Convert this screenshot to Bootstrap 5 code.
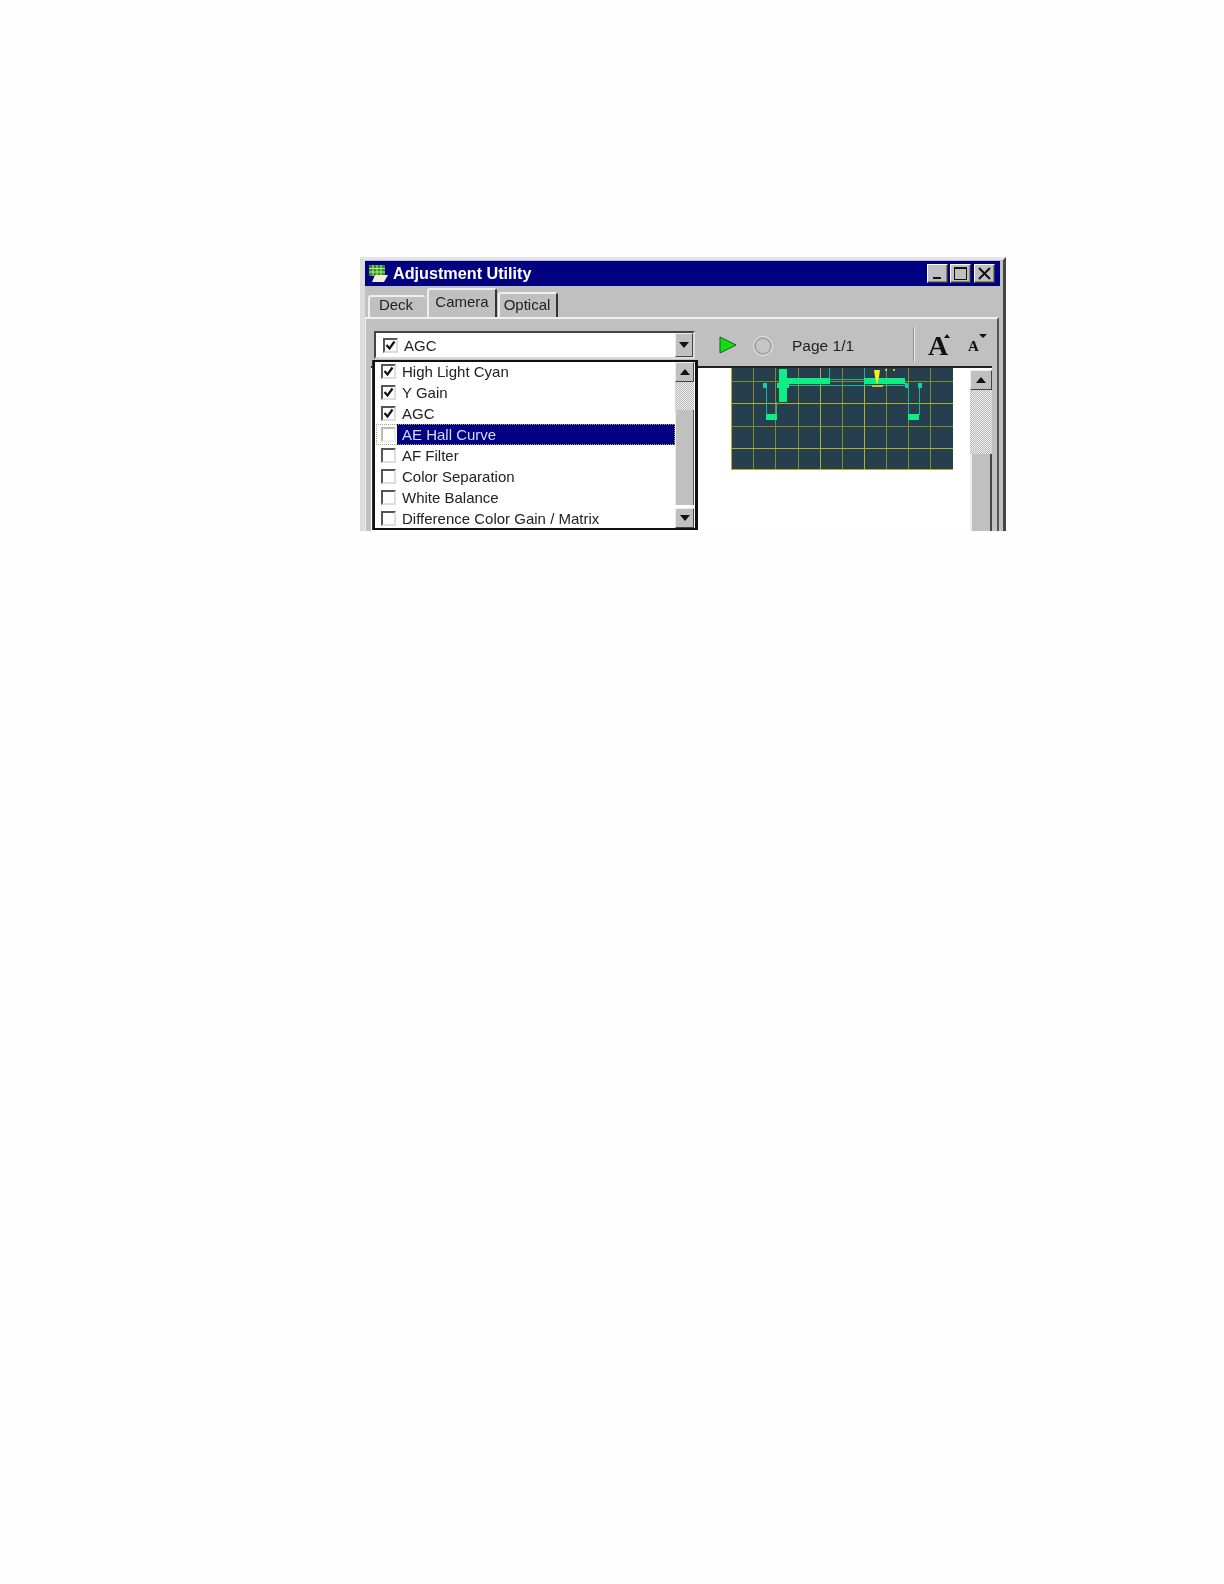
<!DOCTYPE html>
<html lang="en">
<head>
<meta charset="utf-8">
<title>Adjustment Utility</title>
<link rel="stylesheet" href="https://cdn.jsdelivr.net/npm/bootstrap@5.3.0/dist/css/bootstrap.min.css">
<style>
html,body{background:#fefefe;height:1584px;overflow:hidden}
body{font-family:"Liberation Sans",Arial,sans-serif;color:#222}
.au-win{margin:257px 0 0 360px;width:646px;height:274px;background:#c0c0c0;border-top:3px solid #e6e6e6;border-left:5px solid #dcdcdc;border-right:3px solid #444;position:relative;overflow:hidden;filter:blur(.45px)}
.au-title{height:25px;margin:1px 3px 0 0;background:#000080;color:#fff;font-weight:700;font-size:16.2px;line-height:25px;padding:0 5px 0 4px}
.au-title>svg{margin-right:5px;flex:none}
.au-wb{width:21px;height:19px;background:#c0c0c0;border:1px solid;border-color:#fff #333 #333 #fff;box-shadow:inset -1px -1px 0 #808080}
.au-wb svg{margin:0;display:block}
.au-wbgap{margin-left:2px}
.au-wbgap2{margin-left:3px}
.au-tabs{height:31px;align-items:flex-end;padding-left:3px;font-size:15px}
.au-tab{border-top:2px solid #efefef;border-left:2px solid #efefef;border-right:2px solid #333;border-radius:3px 3px 0 0;color:#222;text-align:center}
.au-t1{width:57px;height:22px;line-height:16px;border-right:0;margin-right:2px;padding-right:3px}
.au-t2{width:70px;height:29px;line-height:24px;margin-right:1px}
.au-t3{width:60px;height:25px;line-height:22px;padding-right:2px}
.au-panel{border-top:2px solid #f0f0f0;border-right:2px solid #555;margin-right:4px;height:222px;box-shadow:inset 1px 0 0 #eee}
.au-bar{height:47px;padding-top:12px;position:relative}
.au-combo{margin-left:9px;width:321px;height:28px;background:#fff;border:2px solid;border-color:#444 #ddd #ddd #444;padding-left:7px;font-size:15px;line-height:23px}
.au-chk{width:15px;height:15px;border:2px solid;border-color:#555 #ddd #ddd #555;background:#fff;flex:none;display:block}
.au-chk svg{display:block}
.au-combo .au-chk{margin-right:6px}
.au-cbtn{width:18px;height:24px;background:#c0c0c0;border:1px solid;border-color:#eee #444 #444 #eee;margin-left:auto}
.au-tri-d{width:0;height:0;border-left:5px solid transparent;border-right:5px solid transparent;border-top:6px solid #111}
.au-tri-u{width:0;height:0;border-left:5px solid transparent;border-right:5px solid transparent;border-bottom:6px solid #111}
.au-play{margin-left:24px;margin-top:5px;flex:none}
.au-round{margin-left:17px;margin-top:6px;width:18px;height:18px;border-radius:50%;border:2px solid #a4a4a4;background:#c6c6c6;box-shadow:0 0 0 1px #e4e4e4;flex:none}
.au-page{margin-left:20px;margin-top:6px;font-size:15.5px;width:123px;line-height:18px;white-space:nowrap}
.au-sep{width:2px;height:35px;margin-top:-4px;background:#909090;border-right:1px solid #eee;margin-left:-2px;margin-right:2px}
.au-big{margin-left:11px;margin-top:5px;font-family:"Liberation Serif",serif;font-weight:700;font-size:28px;line-height:20px;color:#111;width:20px}
.au-mini{font-family:"Liberation Serif",serif;font-weight:700;font-size:15px;line-height:14px;color:#111;margin-left:18px;margin-top:8px;width:11px}
.au-cup{width:0;height:0;border-left:3px solid transparent;border-right:3px solid transparent;border-bottom:4px solid #111;margin-top:3px;margin-left:-4px}
.au-cdn{width:0;height:0;border-left:4px solid transparent;border-right:4px solid transparent;border-top:4px solid #111;margin-top:3px}
.au-view{margin-left:6px;margin-right:5px;height:172px;background:#fff;border-top:2px solid #222;position:relative}
.au-graph{margin:0 0 0 360px;width:222px;height:102px;display:block;flex:none}
.au-vsb{margin-left:17px;width:22px;flex:none;margin-top:2px}
.au-sbtn{height:20px;background:#c0c0c0;border:1px solid;border-color:#eee #444 #444 #eee;flex:none}
.au-hatch{background-color:#e8e8e8;background-image:repeating-conic-gradient(#b8b8b8 0 25%,#eee 0 50%);background-size:2px 2px}
.au-thumb{background:#c0c0c0;border-left:2px solid #eee;border-right:2px solid #444}
.au-drop{position:absolute;left:8px;top:41px;width:325px;height:170px;background:#fff;border:2px solid #111;border-right-width:3px;z-index:5;box-shadow:-1px 0 0 #333}
.au-rows{width:300px;flex:none;margin-top:-1px}
.au-row{height:21px;padding-left:6px;font-size:15px;line-height:20px;white-space:nowrap;color:#222}
.au-row .au-chk{margin-right:6px}
.au-row.au-sel{outline:1px dotted #b0a860;outline-offset:-1px;color:#d8d8ff;margin-left:1px;padding-left:5px;background:linear-gradient(90deg,#fff 0 21px,#000080 21px)}
.au-row.au-sel .au-chk{border-color:#bbb #eee #eee #bbb}
.au-dsb{width:19px;flex:none}
.au-dsb .au-sbtn{height:20px}
.au-dsb .au-hatch{height:28px}
.au-dsb .au-thumb{height:95px;border-left:1px solid #eee;border-right:1px solid #555}
</style>
</head>
<body>
<div class="au-win">
  <div class="au-title d-flex align-items-center">
    <svg width="19" height="17" viewBox="0 0 19 17"><rect x="0" y="0" width="16" height="11" fill="#2e8b3c"/><path d="M0 3.5h16M0 7h16M4 0v11M8 0v11M12 0v11" stroke="#b8f06a" stroke-width="1"/><path d="M6 10h13l-4 7H3z" fill="#f4f0d8"/></svg>
    <span>Adjustment Utility</span>
    <div class="au-wb ms-auto"><svg width="19" height="17"><rect x="5" y="12" width="8" height="2" fill="#111"/></svg></div>
    <div class="au-wb au-wbgap"><svg width="19" height="17"><rect x="3.5" y="2.5" width="12" height="12" fill="none" stroke="#111"/><rect x="3" y="2" width="13" height="2" fill="#111"/></svg></div>
    <div class="au-wb au-wbgap2"><svg width="19" height="17"><path d="M4 3l11 11M15 3L4 14" stroke="#111" stroke-width="2"/></svg></div>
  </div>
  <div class="au-tabs d-flex">
    <div class="au-tab au-t1">Deck</div>
    <div class="au-tab au-t2">Camera</div>
    <div class="au-tab au-t3">Optical</div>
  </div>
  <div class="au-panel position-relative">
    <div class="au-bar d-flex align-items-start">
      <div class="au-combo d-flex align-items-center">
        <span class="au-chk"><svg width="11" height="11" viewBox="0 0 11 11"><path d="M1.5 5l3 3.5 5-7" fill="none" stroke="#111" stroke-width="2.2"/></svg></span>
        <span>AGC</span>
        <div class="au-cbtn d-flex align-items-center justify-content-center"><div class="au-tri-d"></div></div>
      </div>
      <svg class="au-play" width="18" height="18" viewBox="0 0 18 18"><path d="M1 1l16 8-16 8z" fill="#10e010" stroke="#1a5a1a" stroke-width="1"/></svg>
      <div class="au-round"></div>
      <div class="au-page">Page 1/1</div>
      <div class="au-sep"></div>
      <div class="au-big">A</div><div class="au-cup"></div>
      <div class="au-mini">A</div><div class="au-cdn"></div>
    </div>
    <div class="au-view d-flex align-items-start">
      <svg class="au-graph" viewBox="0 0 222 102">
        <rect width="222" height="102" fill="#263f4e"/>
        <g stroke="#7f8a2c" stroke-width="1">
          <path d="M22.5 0v102M44.5 0v102M67.5 0v102M111.5 0v102M155.5 0v102M177.5 0v102M199.5 0v102M0 13.5h222M0 58.5h222"/>
        </g>
        <g stroke="#b0b028" stroke-width="1">
          <path d="M.5 0v102M89.5 0v102M133.5 0v102M0 35.5h222M0 80.5h222M0 101.5h222"/>
        </g>
        <g stroke="#1fb593" stroke-width="1" fill="none">
          <path d="M35.5 19v28M45.5 34v13M177.5 16v31M188.5 20v27M98.5 0v10M133.5 0v10M47 17.5h128M98 11.5h36"/>
        </g>
        <g fill="#0fee84">
          <rect x="48" y="1" width="8" height="33"/><rect x="46" y="15" width="12" height="5"/>
          <rect x="56" y="10" width="43" height="6"/><rect x="133" y="10" width="41" height="6"/>
          <rect x="35" y="46" width="11" height="6"/><rect x="177" y="46" width="11" height="6"/>
        </g>
        <g fill="#14d0a8"><rect x="32" y="15" width="4" height="5"/><rect x="187" y="15" width="4" height="5"/><rect x="174" y="15" width="3" height="5"/></g>
        <g fill="#f4ee20"><path d="M143 2h6l-1 7-2 8-2-8z"/><rect x="141" y="17" width="11" height="2" fill="#c8c030"/><circle cx="155" cy="2" r="1"/><circle cx="163" cy="2" r="1"/></g>
      </svg>
      <div class="au-vsb d-flex flex-column">
        <div class="au-sbtn d-flex align-items-center justify-content-center"><div class="au-tri-u"></div></div>
        <div class="au-hatch" style="height:64px"></div>
        <div class="au-thumb" style="height:90px"></div>
      </div>
    </div>
    <div class="au-drop d-flex">
      <div class="au-rows">
        <div class="au-row d-flex align-items-center"><span class="au-chk"><svg width="11" height="11" viewBox="0 0 11 11"><path d="M1.5 5l3 3.5 5-7" fill="none" stroke="#111" stroke-width="2.2"/></svg></span><span>High Light Cyan</span></div>
        <div class="au-row d-flex align-items-center"><span class="au-chk"><svg width="11" height="11" viewBox="0 0 11 11"><path d="M1.5 5l3 3.5 5-7" fill="none" stroke="#111" stroke-width="2.2"/></svg></span><span>Y Gain</span></div>
        <div class="au-row d-flex align-items-center"><span class="au-chk"><svg width="11" height="11" viewBox="0 0 11 11"><path d="M1.5 5l3 3.5 5-7" fill="none" stroke="#111" stroke-width="2.2"/></svg></span><span>AGC</span></div>
        <div class="au-row au-sel d-flex align-items-center"><span class="au-chk"></span><span>AE Hall Curve</span></div>
        <div class="au-row d-flex align-items-center"><span class="au-chk"></span><span>AF Filter</span></div>
        <div class="au-row d-flex align-items-center"><span class="au-chk"></span><span>Color Separation</span></div>
        <div class="au-row d-flex align-items-center"><span class="au-chk"></span><span>White Balance</span></div>
        <div class="au-row d-flex align-items-center"><span class="au-chk"></span><span>Difference Color Gain / Matrix</span></div>
      </div>
      <div class="au-dsb d-flex flex-column">
        <div class="au-sbtn d-flex align-items-center justify-content-center"><div class="au-tri-u"></div></div>
        <div class="au-hatch"></div>
        <div class="au-thumb"></div>
        <div class="au-sbtn d-flex align-items-center justify-content-center mt-auto"><div class="au-tri-d"></div></div>
      </div>
    </div>
  </div>
</div>
<script src="https://cdn.jsdelivr.net/npm/bootstrap@5.3.0/dist/js/bootstrap.bundle.min.js"></script>
</body>
</html>
